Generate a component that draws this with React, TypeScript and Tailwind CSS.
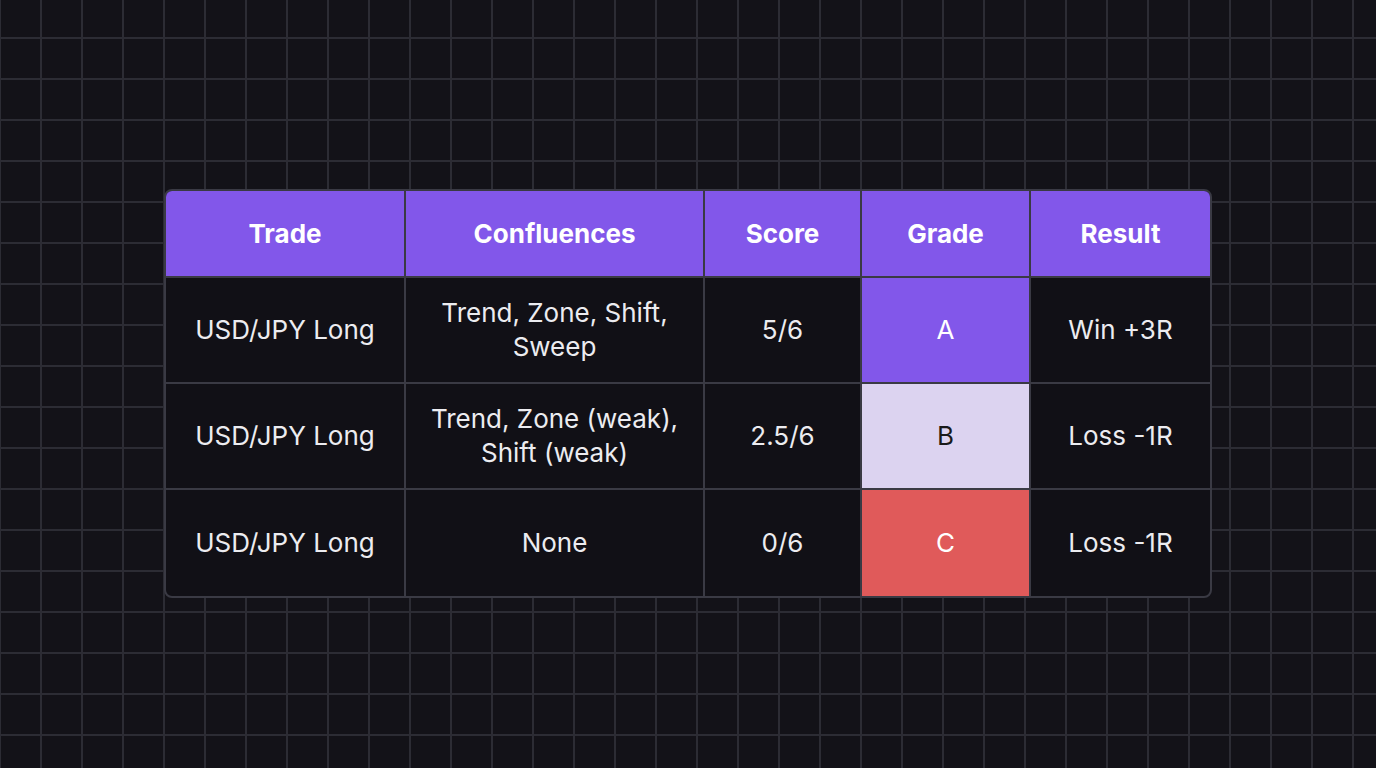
const rows = [
  { trade: "USD/JPY Long", conf: ["Trend, Zone, Shift,", "Sweep"], score: "5/6", grade: "A", gradeCls: "bg-[#8257ea] text-white", result: "Win +3R" },
  { trade: "USD/JPY Long", conf: ["Trend, Zone (weak),", "Shift (weak)"], score: "2.5/6", grade: "B", gradeCls: "bg-[#dcd3f0] text-[#1a1a1a]", result: "Loss -1R" },
  { trade: "USD/JPY Long", conf: ["None"], score: "0/6", grade: "C", gradeCls: "bg-[#e05a5a] text-white", result: "Loss -1R" },
];

const cols = ["w-[240px]", "w-[299px]", "w-[157px]", "w-[169px]", "w-[181px]"];
const heads = ["Trade", "Confluences", "Score", "Grade", "Result"];

export default function App() {
  return (
    <div
      className="w-[1376px] h-[768px] bg-[#131218] flex items-start justify-start pt-[189px] pl-[164px] font-[Inter]"
      style={{
        backgroundImage:
          "linear-gradient(to right, #2c2c34 2px, transparent 2px), linear-gradient(to bottom, #2c2c34 2px, transparent 2px)",
        backgroundSize: "41px 41px",
        backgroundPosition: "40px 37px",
      }}
    >
      <div className="border-2 border-[#3a3a44] rounded-lg overflow-hidden bg-[#111016] w-[1048px]">
        <div className="flex bg-[#8257ea] h-[87px] border-b-2 border-[#3a3a44]">
          {heads.map((h, i) => (
            <div key={h} className={`${cols[i]} flex items-center justify-center text-white font-bold text-[26px] ${i < 4 ? "border-r-2 border-[#3a3a44]" : "flex-1"}`}>
              {h}
            </div>
          ))}
        </div>
        {rows.map((r, ri) => (
          <div key={ri} className={`flex h-[106px] text-[#ececf0] text-[26px] leading-[34px] ${ri < 2 ? "border-b-2 border-[#3a3a44]" : ""}`}>
            <div className={`${cols[0]} border-r-2 border-[#3a3a44] flex items-center justify-center`}>{r.trade}</div>
            <div className={`${cols[1]} border-r-2 border-[#3a3a44] flex flex-col items-center justify-center`}>
              {r.conf.map((c) => <span key={c}>{c}</span>)}
            </div>
            <div className={`${cols[2]} border-r-2 border-[#3a3a44] flex items-center justify-center`}>{r.score}</div>
            <div className={`${cols[3]} border-r-2 border-[#3a3a44] flex items-center justify-center ${r.gradeCls}`}>{r.grade}</div>
            <div className="flex-1 flex items-center justify-center">{r.result}</div>
          </div>
        ))}
      </div>
    </div>
  );
}
